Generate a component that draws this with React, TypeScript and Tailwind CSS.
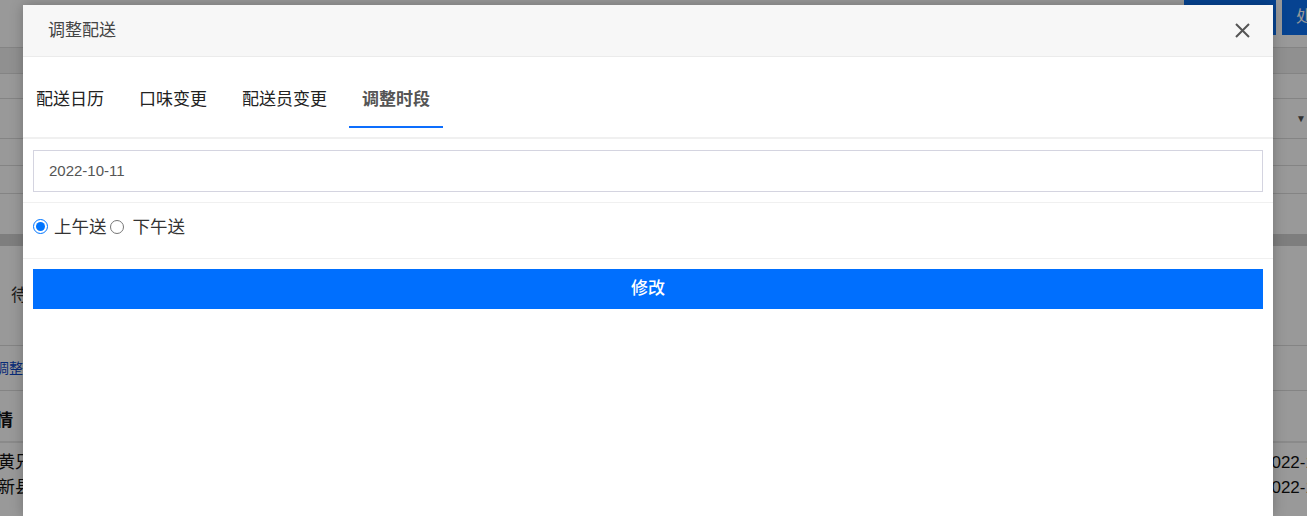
import { useState } from "react";

const tabs = ["配送日历", "口味变更", "配送员变更", "调整时段"];

function BackgroundPage() {
  return (
    <div className="w-[1307px] h-[516px] bg-white text-[#333] overflow-hidden">
      {/* top bar */}
      <div className="h-[48px] flex justify-end items-start border-b border-[#dcdcdc]">
        <div className="h-[35px] w-[92px] bg-[#0b70f2] mr-[6px]" />
        <div className="h-[35px] w-[25px] bg-[#0b70f2] text-white text-[16px] pl-[14px] pt-[5px] overflow-hidden whitespace-nowrap">
          处理
        </div>
      </div>
      <div className="h-[26px] bg-[#f0f0f0] border-b border-[#dcdcdc]" />
      <div className="h-[25px] border-b border-[#dcdcdc]" />
      <div className="h-[40px] border-b border-[#dcdcdc] flex justify-end items-center pr-[1px]">
        <span className="text-[#555] text-[10px] leading-none">▼</span>
      </div>
      <div className="h-[27px] border-b border-[#dcdcdc]" />
      <div className="h-[28px] border-b border-[#dcdcdc]" />
      <div className="h-[40px]" />
      <div className="h-[12px] bg-[#d2d2d2]" />

      {/* card */}
      <div className="h-[100px] border-b border-[#dcdcdc] flex items-center pl-[11px] text-[17px]">
        待配送
      </div>
      <div className="h-[45px] border-b border-[#dcdcdc] flex items-center text-[14px] text-[#0d47c9] -ml-[5px]">
        调整配送
      </div>
      <div className="h-[52px] border-b-2 border-[#e6e6e6] flex items-center pt-[10px] font-bold text-[17px] text-[#111] -ml-[21px]">
        详情
      </div>
      <div className="flex flex-col pt-[7px] text-[17px] text-[#111]">
        {["黄兄弟", "新县城"].map((n) => (
          <div key={n} className="h-[25px] flex items-center">
            <span className="flex-1 -ml-[2px]">{n}</span>
            <span className="w-[45px] whitespace-nowrap">2022-10-11</span>
          </div>
        ))}
      </div>
    </div>
  );
}

export default function App() {
  const [active, setActive] = useState(3);
  const [slot, setSlot] = useState("am");

  return (
    <div
      className="relative w-[1307px] h-[516px] overflow-hidden"
      style={{ fontFamily: '"Liberation Sans", "Noto Sans CJK SC", sans-serif' }}
    >
      <BackgroundPage />
      <div className="absolute inset-0 bg-black/40" />

      {/* Modal */}
      <div className="absolute left-[23px] top-[5px] w-[1250px] bottom-0 bg-white shadow-[0_0_12px_rgba(0,0,0,0.25)] flex flex-col">
        <div className="h-[52px] shrink-0 bg-[#f7f7f7] border-b border-[#ebebeb] flex items-center justify-between pl-[26px] pr-[23px]">
          <span className="text-[17px] text-[#444] -ml-[1px]">调整配送</span>
          <svg width="15" height="15" viewBox="0 0 15 15" className="text-[#555]">
            <path d="M1 1L14 14M14 1L1 14" stroke="currentColor" strokeWidth="2" />
          </svg>
        </div>

        {/* Tabs */}
        <div className="h-[82px] shrink-0 border-b-2 border-[#f0f0f0] flex items-start pt-[17px] gap-[9px]">
          {tabs.map((t, i) => (
            <button
              key={t}
              onClick={() => setActive(i)}
              className={
                "px-[13px] py-[14px] text-[17px] leading-[24px] border-b-2 " +
                (i === active
                  ? "font-bold text-[#555] border-[#0d6efd]"
                  : "text-[#222] border-transparent")
              }
            >
              {t}
            </button>
          ))}
        </div>

        <div className="px-[10px] pt-[11px] pb-[10px] border-b border-[#f0f0f0]">
          <div className="h-[42px] border border-[#d4d4e0] flex items-center pl-[15px] text-[15px] text-[#555]">
            2022-10-11
          </div>
        </div>

        <div className="h-[56px] px-[10px] pb-[6px] border-b border-[#f0f0f0] flex items-center text-[17.5px] text-[#333]">
          <label className="flex items-center">
            <input
              type="radio"
              name="slot"
              checked={slot === "am"}
              onChange={() => setSlot("am")}
              className="w-[15px] h-[15px] accent-[#0075ff] mr-[6px] -translate-y-[1px]"
            />
            上午送
          </label>
          <label className="flex items-center ml-[3px]">
            <input
              type="radio"
              name="slot"
              checked={slot === "pm"}
              onChange={() => setSlot("pm")}
              className="w-[14px] h-[14px] accent-[#0075ff] mr-[9px] -translate-y-[1px]"
            />
            下午送
          </label>
        </div>

        <div className="px-[10px] pt-[10px]">
          <button className="w-full h-[40px] bg-[#006ffe] text-white text-[17px] font-medium">
            修改
          </button>
        </div>
      </div>
    </div>
  );
}
